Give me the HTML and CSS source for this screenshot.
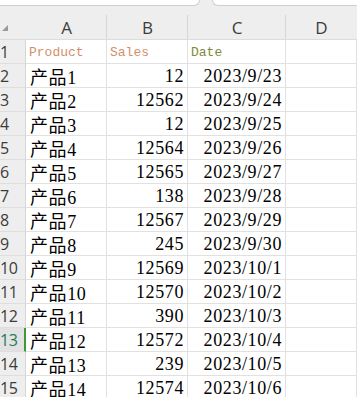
FILE: index.html
```html
<!DOCTYPE html>
<html>
<head>
<meta charset="utf-8">
<link rel="stylesheet" href="styles.css">
</head>
<body>
<div class="tabs">
  <div class="tab tab-left"></div>
  <div class="tab tab-right"></div>
</div>
<div class="sheet">
  <div class="hdr corner"><span class="tri"></span></div>
  <div class="hdr col">A</div>
  <div class="hdr col">B</div>
  <div class="hdr col">C</div>
  <div class="hdr col last">D</div>

  <div class="rn">1</div><div class="c mono orange">Product</div><div class="c mono orange">Sales</div><div class="c mono green">Date</div><div class="c"></div>
  <div class="rn">2</div><div class="c">产品1</div><div class="c r">12</div><div class="c r">2023/9/23</div><div class="c"></div>
  <div class="rn">3</div><div class="c">产品2</div><div class="c r">12562</div><div class="c r">2023/9/24</div><div class="c"></div>
  <div class="rn">4</div><div class="c">产品3</div><div class="c r">12</div><div class="c r">2023/9/25</div><div class="c"></div>
  <div class="rn">5</div><div class="c">产品4</div><div class="c r">12564</div><div class="c r">2023/9/26</div><div class="c"></div>
  <div class="rn">6</div><div class="c">产品5</div><div class="c r">12565</div><div class="c r">2023/9/27</div><div class="c"></div>
  <div class="rn">7</div><div class="c">产品6</div><div class="c r">138</div><div class="c r">2023/9/28</div><div class="c"></div>
  <div class="rn">8</div><div class="c">产品7</div><div class="c r">12567</div><div class="c r">2023/9/29</div><div class="c"></div>
  <div class="rn">9</div><div class="c">产品8</div><div class="c r">245</div><div class="c r">2023/9/30</div><div class="c"></div>
  <div class="rn">10</div><div class="c">产品9</div><div class="c r">12569</div><div class="c r">2023/10/1</div><div class="c"></div>
  <div class="rn">11</div><div class="c">产品10</div><div class="c r">12570</div><div class="c r">2023/10/2</div><div class="c"></div>
  <div class="rn">12</div><div class="c">产品11</div><div class="c r">390</div><div class="c r">2023/10/3</div><div class="c"></div>
  <div class="rn sel">13</div><div class="c">产品12</div><div class="c r">12572</div><div class="c r">2023/10/4</div><div class="c"></div>
  <div class="rn">14</div><div class="c">产品13</div><div class="c r">239</div><div class="c r">2023/10/5</div><div class="c"></div>
  <div class="rn">15</div><div class="c">产品14</div><div class="c r">12574</div><div class="c r">2023/10/6</div><div class="c"></div>
</div>
</body>
</html>
```

FILE: styles.css
```css
* { box-sizing: border-box; }
html, body { margin: 0; padding: 0; }
body {
  width: 357px;
  height: 397px;
  overflow: hidden;
  background: #ffffff;
}
.tabs {
  display: flex;
  height: 7px;
  background: #eeeeee;
}
.tab {
  background: #ffffff;
  height: 6px;
  border-bottom: 1px solid #cfcfcf;
}
.tab-left {
  width: 200px;
  border-right: 1px solid #cfcfcf;
  border-bottom-right-radius: 7px;
}
.tab-right {
  flex: 1;
  margin-left: 12px;
  border-left: 1px solid #cfcfcf;
  border-bottom-left-radius: 7px;
}
.sheet {
  display: grid;
  grid-template-columns: 26px 81px 81px 98px 1fr;
  grid-template-rows: 33px repeat(15, 24px);
}
.hdr {
  background: #eeeeee;
  border-bottom: 1px solid #dcdcdc;
  position: relative;
}
.col {
  font-family: "Open Sans", "Noto Sans", sans-serif;
  font-size: 17px;
  color: #3c3c3c;
  display: flex;
  align-items: center;
  justify-content: center;
  padding-top: 8px;
}
.col::after {
  content: "";
  position: absolute;
  right: 0;
  top: 8px;
  bottom: 0;
  width: 1px;
  background: #d6d6d6;
}
.col.last::after { display: none; }
.corner .tri {
  position: absolute;
  left: 2px;
  top: 18px;
  width: 0;
  height: 0;
  border-left: 6px solid transparent;
  border-bottom: 6px solid #9a9a9a;
}
.rn {
  background: #eeeeee;
  border-bottom: 1px solid #dedede;
  border-right: 1px solid #d6d6d6;
  font-family: "Open Sans", "Noto Sans", sans-serif;
  font-size: 16px;
  letter-spacing: -0.5px;
  color: #3c3c3c;
  display: flex;
  align-items: center;
  padding-left: 0;
  padding-top: 1px;
}
.rn.sel {
  background: #e2e2e2;
  color: #1e7b5a;
  border-right: 2px solid #3f9a35;
}
.c {
  border-right: 1px solid #e1e1e1;
  border-bottom: 1px solid #e1e1e1;
  font-family: "Liberation Serif", "Noto Sans CJK SC", serif;
  font-size: 18px;
  letter-spacing: 0.6px;
  color: #000000;
  display: flex;
  align-items: center;
  padding: 1px 3px 0 4px;
  white-space: nowrap;
  overflow: hidden;
}
.c.r { justify-content: flex-end; padding-right: 3px; }
.mono {
  font-family: "Liberation Mono", "DejaVu Sans Mono", monospace;
  font-size: 13px;
  letter-spacing: 0;
  padding-left: 3px;
}
.orange { color: #d38f6b; }
.green { color: #7d8b3a; }
```
